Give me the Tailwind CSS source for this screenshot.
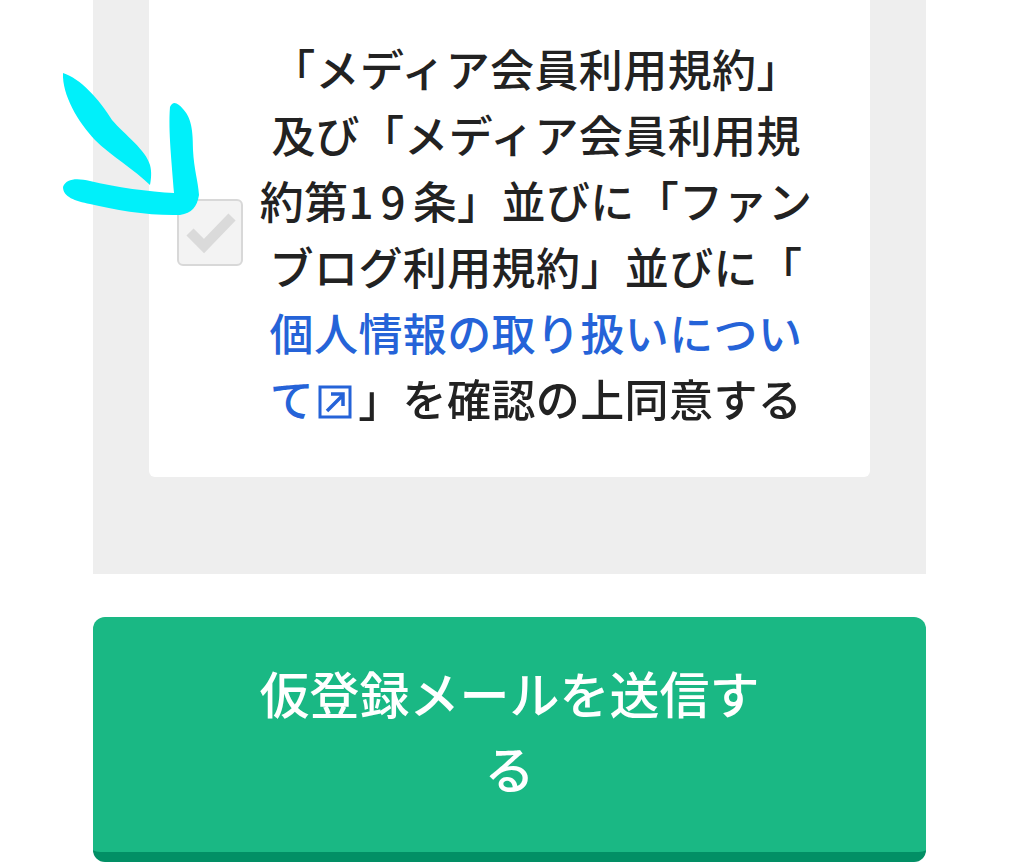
<!DOCTYPE html>
<html lang="ja">
<head>
  <meta charset="UTF-8">
  <title>仮登録</title>
  <script src="https://cdn.jsdelivr.net/npm/@tailwindcss/browser@4"></script>
</head>
<body class="bg-white font-['Noto_Sans_CJK_JP',sans-serif]">
  <div class="relative w-[1024px] h-[863px] overflow-hidden pl-[93px] pr-[98px] blur-[0.5px]">
    <!-- Agreement -->
    <div class="bg-[#eeeeee] h-[574px] px-[56px]">
      <div class="bg-white rounded-b-md h-[477px] pl-[28px] pb-[12px] flex items-center">
        <div class="w-[66px] h-[67px] shrink-0 rounded-md border-2 border-[#d8d8d8] bg-[#f3f3f3] flex items-center justify-center">
          <svg width="52" height="44" viewBox="0 0 52 44"><path d="M6 21 L20 35 L48 6" fill="none" stroke="#dadada" stroke-width="10"/></svg>
        </div>
        <p class="ml-[7px] w-[572px] text-center text-[44px] leading-[66px] tracking-[0.4px] text-[#222222] font-medium">
          「メディア会員利用規約」<br>
          及び「メディア会員利用規<br>
          約第<span class="tracking-[7px]">19</span>条」並びに「ファン<br>
          ブログ利用規約」並びに「<br>
          <a class="text-[#2563d8]">個人情報の取り扱いについ<br>て<svg class="inline-block align-[-2px] ml-[4px] mr-[6px]" width="34" height="34" viewBox="0 0 34 34" fill="none" stroke="#2563d8"><rect x="2" y="2" width="30" height="30" stroke-width="3"/><path d="M9 26 L25 10 M13 9 H25 V21" stroke-width="3.5"/></svg></a>」を確認の上同意する
        </p>
      </div>
    </div>

    <!-- Submit -->
    <button class="block w-full mt-[43px] h-[245px] pb-[10px] px-[155px] rounded-xl bg-[#1ab884] border-b-[10px] border-[#028f65] text-white text-[50px] leading-[75px] font-medium">仮登録メールを送信する</button>

    <!-- Hand-drawn arrow -->
    <svg class="absolute left-0 top-0" width="260" height="260" viewBox="0 0 260 260" fill="#00f0fa">
      <path d="M63 73 C80 78 100 100 112 120 C125 135 146 150 150 165 C152 172 151 180 150 185 C135 170 110 155 95 140 C78 122 62 95 63 73 Z"/>
      <path d="M63 187 C66 178 78 178 90 181 C115 187 150 192 174 193 C172 165 168 130 170 107 C173 100 178 103 183 109 C190 117 193 125 193 150 C194 170 198 180 199 195 C197 207 192 213 180 215 C150 216 115 210 90 204 C75 201 63 197 63 187 Z"/>
    </svg>
  </div>
</body>
</html>
